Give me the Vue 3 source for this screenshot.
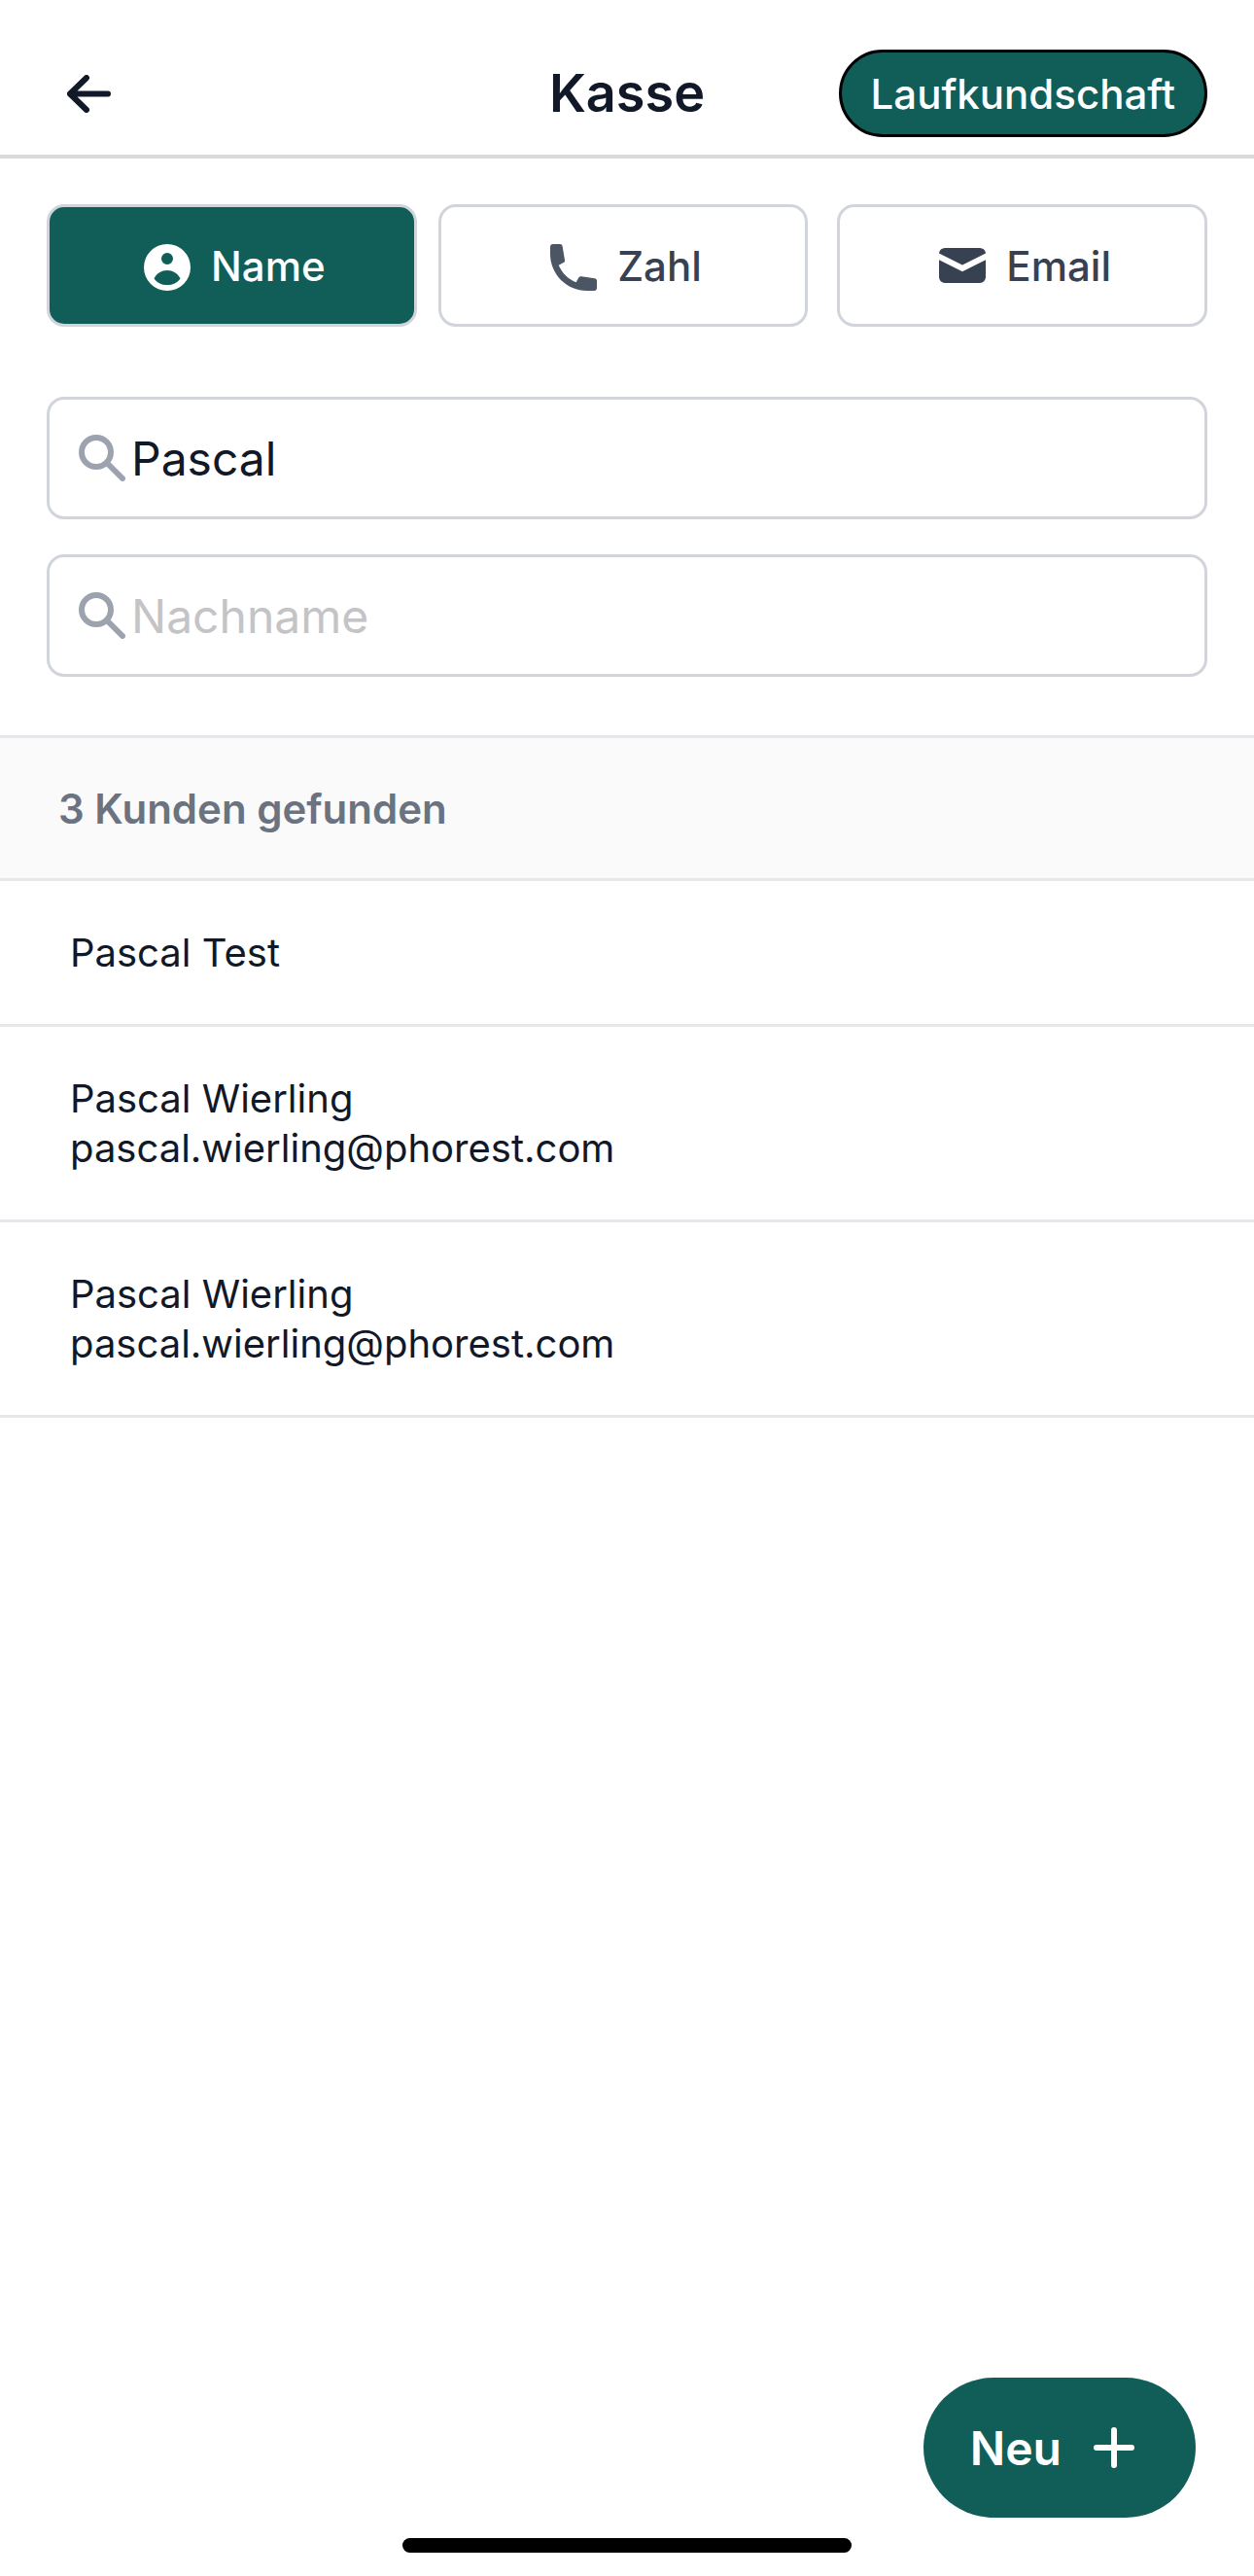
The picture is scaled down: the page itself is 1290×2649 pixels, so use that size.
<script setup>
import { ref } from 'vue'

const mode = ref('name')
const firstName = ref('Pascal')
const lastName = ref('')

const customers = [
  { id: 1, name: 'Pascal Test', email: '' },
  { id: 2, name: 'Pascal Wierling', email: 'pascal.wierling@phorest.com' },
  { id: 3, name: 'Pascal Wierling', email: 'pascal.wierling@phorest.com' },
]
</script>

<template>
  <div class="screen">
    <header class="header">
      <div class="header-start">
        <button class="back" type="button" aria-label="Zurück">
          <svg class="back-icon" viewBox="0 0 45 39" fill="none" stroke="currentColor" stroke-width="6" stroke-linecap="round" stroke-linejoin="round">
            <path d="M20 3 3 19.500 20 36M3 19.500H42" />
          </svg>
        </button>
      </div>
      <h1 class="title">Kasse</h1>
      <div class="header-end">
        <button class="walk-in" type="button">Laufkundschaft</button>
      </div>
    </header>

    <main>
      <section class="search">
        <div class="tabs">
          <button class="tab" :class="{ active: mode === 'name' }" type="button" @click="mode = 'name'">
            <svg class="icon" viewBox="0 0 48 48" fill="currentColor">
              <path fill-rule="evenodd" d="M24 0a24 24 0 1 0 0 48 24 24 0 0 0 0-48Zm0 9a6 6 0 1 1 0 12 6 6 0 0 1 0-12Zm0 33c-5.500 0-10.300-2.200-13.500-6.600C13.300 30 18.300 27 24 27s10.700 3 13.500 8.400C34.300 39.800 29.500 42 24 42Z" />
            </svg>
            <span>Name</span>
          </button>
          <button class="tab" :class="{ active: mode === 'phone' }" type="button" @click="mode = 'phone'">
            <svg class="icon phone" viewBox="0 0 48 48" fill="currentColor">
              <path d="M3 0h7c1.500 0 2.400.900 2.600 2.300L15 16.500c.200 1.200-.300 2-1.300 2.500L8.700 21.700C12 29.500 18.500 36 26.700 39.300L29 35c.700-1.300 1.800-1.900 3.200-1.700l13.300 2c1.600.200 2.500 1.200 2.500 2.700v7c0 2-1 3-3 3h-7C17 48 0 31 0 10V3c0-2 1-3 3-3Z" />
            </svg>
            <span>Zahl</span>
          </button>
          <button class="tab" :class="{ active: mode === 'email' }" type="button" @click="mode = 'email'">
            <svg class="icon" viewBox="0 0 48 48" fill="currentColor">
              <path d="M6 4h36a6 6 0 0 1 6 5.600L24 21.500 0 9.600A6 6 0 0 1 6 4Z" />
              <path d="M0 16.200 24 28.200 48 16.200V34a6 6 0 0 1-6 6H6a6 6 0 0 1-6-6Z" />
            </svg>
            <span>Email</span>
          </button>
        </div>

        <div class="fields">
          <label class="field">
            <svg class="icon" viewBox="0 0 48 48" fill="none" stroke="currentColor">
              <circle cx="18" cy="18" r="15" stroke-width="6" />
              <path d="M29 29 45 45" stroke-width="6" stroke-linecap="round" />
            </svg>
            <input v-model="firstName" type="text" aria-label="Vorname" placeholder="Vorname" />
          </label>
          <label class="field">
            <svg class="icon" viewBox="0 0 48 48" fill="none" stroke="currentColor">
              <circle cx="18" cy="18" r="15" stroke-width="6" />
              <path d="M29 29 45 45" stroke-width="6" stroke-linecap="round" />
            </svg>
            <input v-model="lastName" type="text" aria-label="Nachname" placeholder="Nachname" />
          </label>
        </div>
      </section>

      <h2 class="count">{{ customers.length }} Kunden gefunden</h2>
      <ul class="list">
        <li v-for="customer in customers" :key="customer.id" class="row">
          <div>{{ customer.name }}</div>
          <div v-if="customer.email">{{ customer.email }}</div>
        </li>
      </ul>
    </main>

    <button class="new" type="button">
      <span>Neu</span>
      <svg class="plus" viewBox="0 0 42 42" fill="none" stroke="currentColor" stroke-width="6" stroke-linecap="round">
        <path d="M21 3V39M3 21H39" />
      </svg>
    </button>
    <div class="home-indicator"></div>
  </div>
</template>

<style>
body {
  margin: 0;
  background: #fff;
}
</style>

<style scoped>
.screen {
  position: relative;
  box-sizing: border-box;
  min-height: 100vh;
  padding-bottom: 240px;
  background: #fff;
  color: #111827;
  font-family: Inter, "Liberation Sans", sans-serif;
  font-size: 42px;
  line-height: 51px;
}

button,
input {
  box-sizing: border-box;
  margin: 0;
  padding: 0;
  border: 0;
  background: none;
  color: inherit;
  font: inherit;
}

button {
  cursor: pointer;
}

svg {
  display: block;
  flex: none;
}

.header {
  display: grid;
  grid-template-columns: 1fr auto 1fr;
  align-items: center;
  padding: 51px 48px 18px;
  border-bottom: 4px solid #d9d9d9;
}

.back {
  display: block;
  padding: 21px;
}

.back-icon {
  width: 45px;
  height: 39px;
}

.title {
  margin: 0;
  font-size: 54px;
  font-weight: 600;
  line-height: 66px;
}

.header-end {
  display: flex;
  justify-content: flex-end;
}

.walk-in {
  height: 90px;
  padding: 0 30px;
  border: 3px solid #000;
  border-radius: 45px;
  background: #115e59;
  color: #fff;
  font-weight: 500;
}

.search {
  padding: 47px 48px 60px;
}

.tabs {
  display: flex;
}

.tab {
  flex: 1;
  display: flex;
  align-items: center;
  justify-content: center;
  gap: 21px;
  height: 126px;
  padding-left: 6px;
  border: 3px solid #d1d5db;
  border-radius: 18px;
  color: #374151;
  font-weight: 500;
}

.tab:first-child {
  margin-right: 22px;
}

.tab:last-child {
  margin-left: 30px;
}

.tab.active {
  background: #115e59;
  color: #fff;
}

.icon {
  width: 48px;
  height: 48px;
}

.tab .icon {
  margin-top: 4px;
}

.phone {
  color: #4b5563;
}

.fields {
  display: grid;
  gap: 36px;
  margin-top: 72px;
}

.field {
  box-sizing: border-box;
  display: flex;
  align-items: center;
  gap: 6px;
  height: 126px;
  padding: 0 30px;
  border: 3px solid #d1d5db;
  border-radius: 18px;
  color: #9ca3af;
}

.field input {
  flex: 1;
  min-width: 0;
  height: 60px;
  outline: none;
  color: #111827;
  font-size: 48px;
}

.field input::placeholder {
  color: #c4c4c6;
  opacity: 1;
}

.count {
  margin: 0;
  padding: 47px 60px 46px;
  border-top: 3px solid #e5e7eb;
  border-bottom: 3px solid #e5e7eb;
  background: #fafafa;
  color: #6b7280;
  font-size: 42px;
  font-weight: 600;
}

.list {
  margin: 0;
  padding: 0;
  list-style: none;
  font-size: 40px;
}

.row {
  padding: 48px 72px;
  border-bottom: 3px solid #e5e7eb;
}

.new {
  position: absolute;
  right: 60px;
  bottom: 60px;
  display: flex;
  align-items: center;
  gap: 33px;
  height: 144px;
  padding: 0 63px 0 48px;
  border-radius: 72px;
  background: #115e59;
  color: #fff;
  font-size: 48px;
  font-weight: 600;
}

.plus {
  width: 42px;
  height: 42px;
}

.home-indicator {
  position: absolute;
  bottom: 24px;
  left: 50%;
  width: 462px;
  height: 15px;
  margin-left: -231px;
  border-radius: 8px;
  background: #000;
}
</style>
